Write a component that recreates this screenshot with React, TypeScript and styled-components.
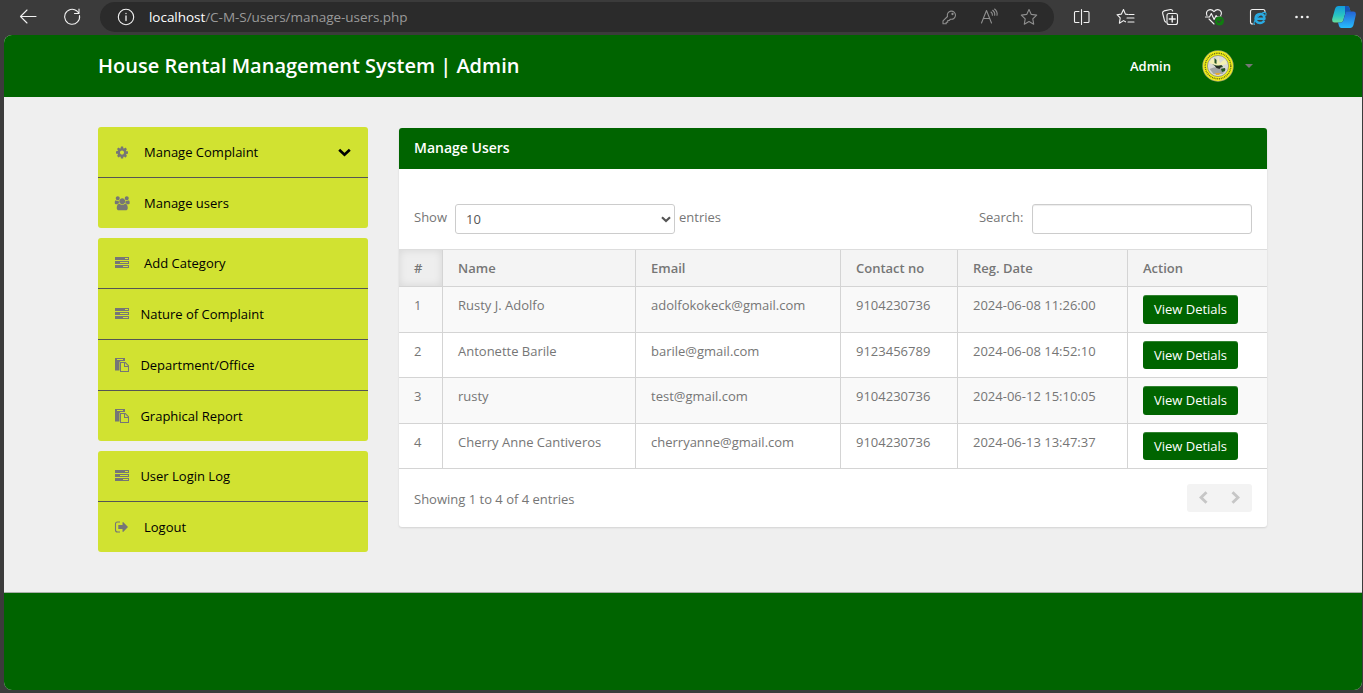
import React from "react";
import styled, { createGlobalStyle } from "styled-components";

const GREEN = "#006400";
const FONT = '"Open Sans", "Liberation Sans", sans-serif';

const GlobalStyle = createGlobalStyle`
  * { box-sizing: border-box; }
  html, body { margin: 0; padding: 0; }
  body {
    width: 1363px;
    height: 693px;
    overflow: hidden;
    background: #3b3b3b;
    color: #767676;
    font: 13px/20px ${FONT};
  }
`;

const Browser = styled.div`
  display: flex;
  flex-direction: column;
  width: 1363px;
  height: 693px;
  background: #3b3b3b;
`;

const Toolbar = styled.div`
  display: flex;
  align-items: flex-start;
  flex: 0 0 35px;
  height: 35px;
  padding-left: 16px;
`;

const ToolIcon = styled.svg<{ $gap?: number; $tone?: string }>`
  flex: none;
  display: block;
  width: 24px;
  height: 24px;
  margin: 5px ${(p) => p.$gap ?? 20}px 0 0;
  fill: none;
  stroke: ${(p) => p.$tone ?? "#f2f2f2"};
  stroke-width: 1.1;
  stroke-linecap: round;
  stroke-linejoin: round;
`;

const AddressBar = styled.div`
  display: flex;
  width: 954px;
  height: 30px;
  margin: 2px 16px 0 0;
  padding-left: 14px;
  border-radius: 15px;
  background: #2b2b2b;

  & > svg { margin-top: 3px; }
`;

const Url = styled.div`
  flex: 1;
  padding-top: 5px;
  font: 13.5px/20px ${FONT};
  letter-spacing: -0.04px;
  color: #9a9a9a;
  white-space: nowrap;

  b { font-weight: 400; color: #fff; }
`;

const Page = styled.div`
  display: flex;
  flex-direction: column;
  width: 1358px;
  height: 655px;
  margin-left: 4px;
  border-radius: 8px;
  overflow: hidden;
  background: #efefef;
`;

const Header = styled.header`
  display: flex;
  align-items: center;
  flex: 0 0 62px;
  padding: 0 109px 0 94px;
  background: ${GREEN};
  color: #fff;
`;

const Brand = styled.h1`
  flex: 1;
  margin: 0;
  font: 600 20px/20px ${FONT};
`;

const Account = styled.div`
  display: flex;
  align-items: center;
  font-weight: 600;
`;

const Avatar = styled.svg`
  display: block;
  width: 32px;
  height: 32px;
  margin: 0 11px 0 31px;
`;

const Caret = styled.span`
  border: 4px solid transparent;
  border-top-color: #767676;
  border-bottom: 0;
`;

const Main = styled.main`
  display: flex;
  align-items: flex-start;
  flex: 0 0 495px;
  padding: 30px 95px 0 94px;
`;

const Sidebar = styled.nav`
  display: flex;
  flex-direction: column;
  gap: 10px;
  width: 270px;
  margin-right: 31px;
`;

const MenuGroup = styled.div`
  overflow: hidden;
  border-radius: 3px;
  background: #d1e231;
`;

const MenuItem = styled.a<{ $wide?: boolean }>`
  display: flex;
  align-items: center;
  height: 50px;
  padding: 0 17px 0 16px;
  color: #000;

  & + & { height: 51px; border-top: 1px solid #555; }
  & > span { flex: 1; margin-left: ${(p) => (p.$wide ? 14 : 10.4)}px; }
`;

const MenuGlyph = styled.svg`
  flex: none;
  width: 16px;
  height: 16px;
  fill: #767676;
`;

const Chevron = styled.svg`
  display: block;
  fill: none;
  stroke: currentColor;
`;

const Panel = styled.section`
  width: 868px;
  height: 399px;
  margin-top: 1px;
  border-radius: 3px;
  background: #fff;
  box-shadow: 0 1px 2px rgba(0, 0, 0, 0.12);
`;

const PanelTitle = styled.h3`
  height: 41px;
  margin: 0;
  padding: 10px 15px;
  border-radius: 3px 3px 0 0;
  background: ${GREEN};
  color: #fff;
  font: 600 14px/20px ${FONT};
`;

const Controls = styled.div`
  display: flex;
  align-items: flex-start;
  height: 80px;
  padding: 35px 15px 0;
`;

const ControlLabel = styled.label<{ $push?: boolean }>`
  padding-top: 3px;
  margin-left: ${(p) => (p.$push ? "auto" : 0)};
`;

const Field = styled.div<{ $left: number }>`
  display: flex;
  align-items: center;
  justify-content: space-between;
  width: 220px;
  height: 30px;
  margin-left: ${(p) => p.$left}px;
  margin-right: 4px;
  padding: 0 3px 0 10px;
  border: 1px solid #ccc;
  border-radius: 3px;
  color: #555;

  &:last-child { margin-right: 0; box-shadow: inset 0 1px 1px rgba(0, 0, 0, 0.075); }
`;

const Row = styled.div<{ $height: number; $shade?: string; $head?: boolean }>`
  display: grid;
  grid-template-columns: 44px 193px 205px 117px 170px 139px;
  height: ${(p) => p.$height}px;
  border-bottom: 1px solid #d4d4d4;
  border-top: ${(p) => (p.$head ? "1px solid #ddd" : "0")};
  background: ${(p) => p.$shade ?? "#fff"};
  font-weight: ${(p) => (p.$head ? 600 : 400)};
`;

const Cell = styled.div<{ $sorted?: boolean }>`
  padding: 8px 0 0 15px;
  border-right: 1px solid #d4d4d4;
  background: ${(p) => (p.$sorted ? "#eee" : "transparent")};
  box-shadow: ${(p) => (p.$sorted ? "inset 0 0 8px rgba(0, 0, 0, 0.1)" : "none")};
  white-space: nowrap;

  &:last-child { border-right: 0; }
`;

const DetailButton = styled.button<{ $height: number }>`
  display: block;
  width: 95px;
  height: ${(p) => p.$height}px;
  padding: 0 0 ${(p) => p.$height - 28}px;
  border: 0;
  border-radius: 3px;
  background: ${GREEN};
  box-shadow: inset 0 1px 0 rgba(255, 255, 255, 0.2);
  color: #fff;
  font: 13px/20px ${FONT};
`;

const PanelFooter = styled.div`
  display: flex;
  justify-content: space-between;
  padding: 15px 15px 0;

  & > span { padding-top: 5px; }
`;

const Pager = styled.div`
  display: flex;
  align-items: flex-start;
  justify-content: space-between;
  width: 65px;
  height: 28px;
  padding: 7px 12px 0;
  border-radius: 3px;
  background: #f3f3f3;
  color: #c6c6c6;
`;

const Footer = styled.footer`
  flex: 1;
  border-top: 1px solid #a9b0a9;
  background: ${GREEN};
`;

type GlyphName = "cog" | "group" | "tasks" | "paste" | "signout";

function Glyph({ name }: { name: GlyphName }) {
  if (name === "cog") {
    return (
      <MenuGlyph viewBox="-128 -192 2048 2048">
        <path d="M1152 896q0-106-75-181t-181-75-181 75-75 181 75 181 181 75 181-75 75-181zm512-109v222q0 12-8 23t-20 13l-185 28q-19 54-39 91 35 50 107 138 10 12 10 25t-9 23q-27 37-99 108t-94 71q-12 0-26-9l-138-108q-44 23-91 38-16 136-29 186-7 28-36 28h-222q-14 0-24.5-8.5t-11.5-21.5l-28-184q-49-16-90-37l-141 107q-10 9-25 9-14 0-25-11-126-114-165-168-7-10-7-23 0-12 8-23 15-21 51-66.5t54-70.5q-27-50-41-99l-183-27q-13-2-21-12.5t-8-23.5v-222q0-12 8-23t19-13l186-28q14-46 39-92-40-57-107-138-10-12-10-24 0-10 9-23 26-36 98.5-107.5t94.5-71.5q13 0 26 10l138 107q44-23 91-38 16-136 29-186 7-28 36-28h222q14 0 24.5 8.5t11.5 21.5l28 184q49 16 90 37l142-107q9-9 24-9 13 0 25 10 129 119 165 170 7 8 7 22 0 12-8 23-15 21-51 66.5t-54 70.5q26 50 41 98l183 28q13 2 21 12.5t8 23.5z" />
      </MenuGlyph>
    );
  }
  if (name === "group") {
    return (
      <MenuGlyph viewBox="-32 -160 2048 2048">
        <path d="M657 896q-162 5-265 128h-134q-82 0-138-40.5t-62-118.5q0-353 124-353 6 0 43.5 21t97.5 42.5 119 21.5q67 0 133-23-5 37-5 66 0 139 81 256zm1071 637q0 120-73 189.5t-194 69.5h-874q-121 0-194-69.5t-73-189.5q0-53 3.5-103.500t14-109 26.500-108.500 43-97.500 62-81 85.500-53.500 111.500-20q10 0 43 21.500t73 48 107 48 135 21.500 135-21.500 107-48 73-48 43-21.500q61 0 111.500 20t85.500 53.500 62 81 43 97.500 26.500 108.500 14 109 3.500 103.500zm-1024-1277q0 106-75 181t-181 75-181-75-75-181 75-181 181-75 181 75 75 181zm704 384q0 159-112.500 271.500t-271.500 112.500-271.500-112.500-112.500-271.500 112.500-271.500 271.500-112.500 271.500 112.500 112.500 271.500zm576 225q0 78-62 118.500t-138 40.500h-134q-103-123-265-128 81-117 81-256 0-29-5-66 66 23 133 23 59 0 119-21.500t97.500-42.500 43.500-21q124 0 124 353zm-128-609q0 106-75 181t-181 75-181-75-75-181 75-181 181-75 181 75 75 181z" />
      </MenuGlyph>
    );
  }
  if (name === "tasks") {
    return (
      <MenuGlyph viewBox="0 0 16 16">
        <path
          fillRule="evenodd"
          d="M1 2h14v3H1zM11 3v1h3V3zM1 6h14v3H1zM6 7v1h8V7zM1 10h14v3H1zM9 11v1h5v-1z"
        />
      </MenuGlyph>
    );
  }
  if (name === "paste") {
    return (
      <MenuGlyph viewBox="0 0 16 16">
        <path fillRule="evenodd" d="M1 1h10v3H6.500L5.500 5v8.500H1zM3 2v1h6V2z" />
        <path fillRule="evenodd" d="M6 5h5.500l3.500 3.500V15H6zM7 6v8h7v-4h-4V6zM11 6v3h3z" />
      </MenuGlyph>
    );
  }
  return (
    <MenuGlyph viewBox="0 0 16 16">
      <path d="M6 3H3.500Q1.500 3 1.500 5v6q0 2 2 2H6" fill="none" stroke="#767676" strokeWidth="1.1" />
      <path d="M4.300 6h4.200V3.500q.3-.7.900-.2L14 8l-4.600 4.700q-.6.500-.9-.2V10H4.300z" />
    </MenuGlyph>
  );
}

interface Entry {
  glyph: GlyphName;
  label: string;
  wide?: boolean;
  open?: boolean;
}

const menu: Entry[][] = [
  [
    { glyph: "cog", label: "Manage Complaint", wide: true, open: true },
    { glyph: "group", label: "Manage users", wide: true },
  ],
  [
    { glyph: "tasks", label: "Add Category", wide: true },
    { glyph: "tasks", label: "Nature of Complaint" },
    { glyph: "paste", label: "Department/Office" },
    { glyph: "paste", label: "Graphical Report" },
  ],
  [
    { glyph: "tasks", label: "User Login Log" },
    { glyph: "signout", label: "Logout", wide: true },
  ],
];

const users = [
  ["1", "Rusty J. Adolfo", "adolfokokeck@gmail.com", "9104230736", "2024-06-08 11:26:00"],
  ["2", "Antonette Barile", "barile@gmail.com", "9123456789", "2024-06-08 14:52:10"],
  ["3", "rusty", "test@gmail.com", "9104230736", "2024-06-12 15:10:05"],
  ["4", "Cherry Anne Cantiveros", "cherryanne@gmail.com", "9104230736", "2024-06-13 13:47:37"],
];

function BrowserToolbar() {
  return (
    <Toolbar>
      <ToolIcon viewBox="0 0 24 24">
        <path d="M20 11.500H4.500M11 5l-6.500 6.500L11 18" />
      </ToolIcon>
      <ToolIcon viewBox="0 0 24 24" $gap={16}>
        <path d="M19.500 10.500a7.500 7.500 0 1 1-2.600-4.500l1.800 2M19 4v4.500h-4.500" />
      </ToolIcon>
      <AddressBar>
        <ToolIcon viewBox="0 0 24 24" $gap={11}>
          <circle cx="12" cy="12" r="7.700" />
          <path d="M12 11v4.500M12 8.300v.3" strokeWidth="1.300" />
        </ToolIcon>
        <Url>
          <b>localhost</b>/C-M-S/users/manage-users.php
        </Url>
        <ToolIcon viewBox="0 0 24 24" $gap={16} $tone="#8f8f8f">
          <path d="M10.500 11.500a4.100 4.100 0 1 1 3 2.700l-1.300 1.300h-1.500v1.700H9.200v1.500H6v-2.800z" />
          <circle cx="15.500" cy="9" r=".6" />
        </ToolIcon>
        <ToolIcon viewBox="0 0 24 24" $gap={16} $tone="#8f8f8f">
          <path d="M4.500 18l5-12.500 5 12.500M6.200 13.500h6.600M14 7q1.700 1.300 1.400 3.300M15.700 5.300q2.500 2 2 5M17.600 4q3.200 2.800 2.400 6.300" />
        </ToolIcon>
        <ToolIcon viewBox="0 0 24 24" $gap={13} $tone="#8f8f8f">
          <path d="M12 4.500l2.300 4.900 5.400.7-3.900 3.800.9 5.300-4.700-2.600-4.700 2.600.9-5.300-3.900-3.800 5.400-.7z" />
        </ToolIcon>
      </AddressBar>
      <ToolIcon viewBox="0 0 24 24">
        <path d="M9 6.500H5.500q-1 0-1 1v9q0 1 1 1H9M14 6.500h4q1 0 1 1v9q0 1-1 1h-4M11.500 4.500v15" />
      </ToolIcon>
      <ToolIcon viewBox="0 0 24 24">
        <path d="M14 9.500l-2.600-.4L9.500 4.500 7.400 9.100l-4.400.6 3.200 3.200-.8 5.300 4.100-2.600 2 1.200M15 9.500h5M13 13h7M14 17h6" />
      </ToolIcon>
      <ToolIcon viewBox="0 0 24 24">
        <path d="M8 17.200q-1.100-.4-1.500-1.700L4.700 8.500q-.5-2 1.400-2.600L12.500 4.500q1.600-.2 2.200 1.500" />
        <rect x="9" y="8.500" width="10.500" height="11" rx="2" />
        <path d="M14.200 11v6M11.200 14h6" strokeWidth="1.400" />
      </ToolIcon>
      <ToolIcon viewBox="0 0 24 24">
        <path d="M5 10.500q-1.500-3.500 1.200-5.300 3.200-1.600 5.800 1.500 2.600-3.100 5.800-1.500 2.700 2 .9 5.300M3.500 12h4l1.800-3.500 2.800 6 2-4 1 1.500h4M7 14l5 5" />
        <circle cx="17.500" cy="16" r="4.500" fill="#107c10" stroke="none" />
        <path d="M15.500 16l1.500 1.500 2.600-3" stroke="#3b3b3b" />
      </ToolIcon>
      <ToolIcon viewBox="0 0 24 24">
        <path d="M7 19H6.500q-2 0-2-2V6.500q0-2 2-2H17q2 0 2 2" />
        <path d="M18.200 15.500q-1.300 2.500-4.200 2.500-4.500-.4-4.500-4.500.3-4.300 4.700-4.500 4.300.2 4.300 4.700H10.500" stroke="#29aae2" strokeWidth="2.400" strokeLinecap="butt" />
        <path d="M8.500 19.500q-2-1.700 3.500-8 5-4.800 7.500-4 1.100.8.200 3" stroke="#29aae2" />
      </ToolIcon>
      <ToolIcon viewBox="0 0 24 24" $gap={18}>
        <g fill="#f2f2f2" stroke="none">
          <circle cx="6.500" cy="12" r="1.300" />
          <circle cx="12" cy="12" r="1.300" />
          <circle cx="17.500" cy="12" r="1.300" />
        </g>
      </ToolIcon>
      <ToolIcon viewBox="0 0 24 24" $gap={0}>
        <defs>
          <linearGradient id="copilotLeft" x1="0" y1="0" x2="0" y2="1">
            <stop offset="0" stopColor="#129bdc" />
            <stop offset=".6" stopColor="#2bc7c0" />
            <stop offset="1" stopColor="#68df9b" />
          </linearGradient>
          <linearGradient id="copilotRight" x1="0" y1="0" x2="0" y2="1">
            <stop offset="0" stopColor="#2462d5" />
            <stop offset="1" stopColor="#27bdfd" />
          </linearGradient>
        </defs>
        <g stroke="none">
          <path d="M6.500 1H15q2 0 2.500 2l1 3.500h-3.200q-1.500 0-2 1.700l-2.200 7.600q-.6 1.700-2.400 1.700H2.500q-2.800 0-2.300-3.500L3 4q.9-3 3.500-3z" fill="url(#copilotLeft)" />
          <path d="M18 23H9.500q-2 0-2.500-2l-1-3.500h3q1.600 0 2.200-1.700l2.200-7.600q.5-1.700 2-1.700h6q3 0 2.400 3.500L21.500 20q-.9 3-3.500 3z" fill="url(#copilotRight)" />
          <path d="M13 1h2q2 0 2.500 2l1 3.500h-3.200q-1.500 0-2 1.700L13 9z" fill="#1554b8" />
        </g>
      </ToolIcon>
    </Toolbar>
  );
}

function Seal() {
  return (
    <Avatar viewBox="0 0 32 32">
      <circle cx="16" cy="16" r="15.700" fill="#a5a86a" />
      <circle cx="16" cy="16" r="14.900" fill="#f4f316" />
      <circle cx="16" cy="16" r="12.800" fill="none" stroke="#6b6b1c" strokeWidth="1.500" strokeDasharray="1 .8" />
      <circle cx="16" cy="16" r="10.600" fill="#d9dad5" stroke="#77775a" strokeWidth=".6" />
      <path d="M7 13l3-5 5 5 1-7 2 7 5-4 2 5-8 2z" fill="#f3f0b4" />
      <path d="M7.500 19q8-4 17 0l-4 5h-9z" fill="#a3a6a4" />
      <path d="M12.500 8l2 2v4l-2-1zM10 14l4 1.500h6l1 1.500-5 1-3-2zM19 19l4-1v3l-3 1z" fill="#24551f" />
      <path d="M12.500 15.500l3.500.7 4-1.200-2.500 4-3-1z" fill="#252b24" />
      <path d="M13 23h6l-2 2h-3z" fill="#e5a936" />
    </Avatar>
  );
}

export default function App() {
  return (
    <Browser>
      <GlobalStyle />
      <BrowserToolbar />
      <Page>
        <Header>
          <Brand>House Rental Management System | Admin</Brand>
          <Account>
            Admin
            <Seal />
            <Caret />
          </Account>
        </Header>
        <Main>
          <Sidebar>
            {menu.map((group, i) => (
              <MenuGroup key={i}>
                {group.map((item) => (
                  <MenuItem key={item.label} $wide={item.wide}>
                    <Glyph name={item.glyph} />
                    <span>{item.label}</span>
                    {item.open && (
                      <Chevron width="13" height="9" viewBox="0 0 13 9" strokeWidth="2.700">
                        <path d="M1.200 1.700l5.300 5 5.300-5" />
                      </Chevron>
                    )}
                  </MenuItem>
                ))}
              </MenuGroup>
            ))}
          </Sidebar>
          <Panel>
            <PanelTitle>Manage Users</PanelTitle>
            <Controls>
              <ControlLabel>Show</ControlLabel>
              <Field $left={8}>
                10
                <Chevron width="10" height="7" viewBox="0 0 10 7" strokeWidth="2.200">
                  <path d="M1 1.300l4 3.700 4-3.700" />
                </Chevron>
              </Field>
              <ControlLabel>entries</ControlLabel>
              <ControlLabel $push>Search:</ControlLabel>
              <Field $left={8.5} />
            </Controls>
            <Row $height={38} $head $shade="#f4f4f4">
              {["#", "Name", "Email", "Contact no", "Reg. Date", "Action"].map((title, i) => (
                <Cell key={title} $sorted={i === 0}>
                  {title}
                </Cell>
              ))}
            </Row>
            {users.map((user, i) => (
              <Row key={user[0]} $height={i % 2 ? 45 : 46} $shade={i % 2 ? "#fff" : "#f9f9f9"}>
                {user.map((value, c) => (
                  <Cell key={c}>{value}</Cell>
                ))}
                <Cell>
                  <DetailButton $height={i % 2 ? 28 : 29}>View Detials</DetailButton>
                </Cell>
              </Row>
            ))}
            <PanelFooter>
              <span>Showing 1 to 4 of 4 entries</span>
              <Pager>
                <Chevron width="9" height="13" viewBox="0 0 9 13" strokeWidth="2.900">
                  <path d="M7.500 1.200L2 6.500l5.500 5.300" />
                </Chevron>
                <Chevron width="9" height="13" viewBox="0 0 9 13" strokeWidth="2.900">
                  <path d="M1.500 1.200L7 6.500l-5.500 5.300" />
                </Chevron>
              </Pager>
            </PanelFooter>
          </Panel>
        </Main>
        <Footer />
      </Page>
    </Browser>
  );
}
